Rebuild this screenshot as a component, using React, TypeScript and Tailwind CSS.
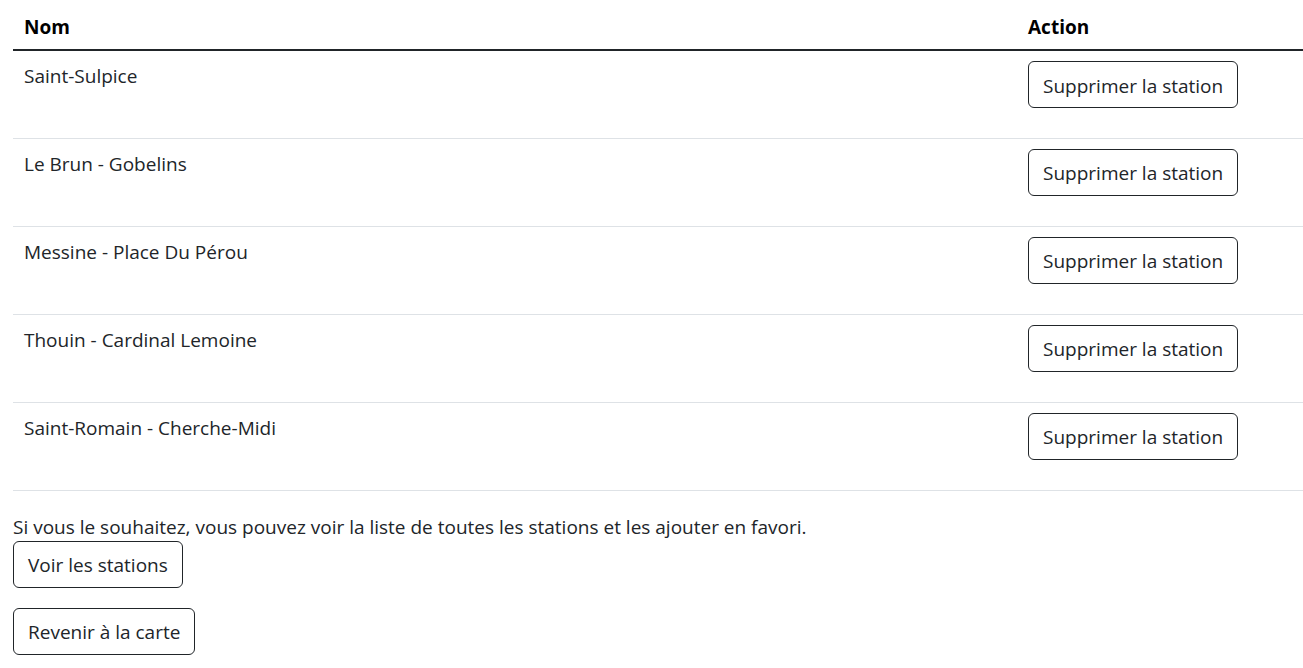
import React from "react";

const stations = [
  "Saint-Sulpice",
  "Le Brun - Gobelins",
  "Messine - Place Du Pérou",
  "Thouin - Cardinal Lemoine",
  "Saint-Romain - Cherche-Midi",
];

function Btn({ children }: { children: React.ReactNode }) {
  return (
    <button className="h-[47px] px-[14px] pt-[2px] rounded-[6px] border border-[#212529] bg-white text-[#212529] text-[19px] leading-[24px] whitespace-nowrap">
      {children}
    </button>
  );
}

export default function App() {
  return (
    <div
      className="bg-white min-h-[668px] pl-[13px] text-[#212529] text-[19px] leading-[24px]"
      style={{ fontFamily: '"Open Sans", "Noto Sans", sans-serif' }}
    >
      <table className="w-[1290px] border-collapse">
        <thead>
          <tr className="border-b-2 border-[#212529]">
            <th className="w-[1004px] pl-[11px] pt-[15px] pb-[10px] text-left font-bold text-black">Nom</th>
            <th className="pl-[11px] pt-[15px] pb-[10px] text-left font-bold text-black">Action</th>
          </tr>
        </thead>
        <tbody>
          {stations.map((s) => (
            <tr key={s} className="h-[88px] border-b border-[#dee2e6] align-top">
              <td className="pl-[11px] pt-[13px]">{s}</td>
              <td className="pl-[11px] pt-[10px]">
                <Btn>Supprimer la station</Btn>
              </td>
            </tr>
          ))}
        </tbody>
      </table>
      <p className="mt-[24px]">
        Si vous le souhaitez, vous pouvez voir la liste de toutes les stations et les ajouter en favori.
      </p>
      <div className="mt-[2px] flex flex-col items-start gap-[20px]">
        <Btn>Voir les stations</Btn>
        <Btn>Revenir à la carte</Btn>
      </div>
    </div>
  );
}
